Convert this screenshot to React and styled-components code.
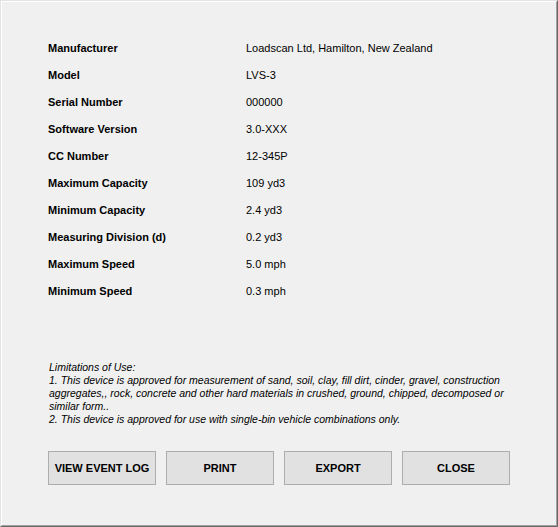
import React from 'react'
import styled, { createGlobalStyle } from 'styled-components'

const Global = createGlobalStyle`
  html, body { margin: 0; padding: 0; background: #f0f0f0; }
  body { font-family: "Liberation Sans", Arial, sans-serif; }
`

const Window = styled.div`
  box-sizing: border-box;
  width: 558px;
  height: 527px;
  background: #f0f0f0;
  border-top: 1px solid #e3e3e3;
  border-left: 1px solid #e3e3e3;
  border-right: 1px solid #696969;
  border-bottom: 1px solid #696969;
`

const Inner = styled.div`
  box-sizing: border-box;
  height: 100%;
  border-top: 1px solid #ffffff;
  border-left: 1px solid #ffffff;
  border-right: 1px solid #a0a0a0;
  border-bottom: 1px solid #a0a0a0;
  padding: 33px 0 0 46px;
  display: flex;
  flex-direction: column;
`

const Table = styled.div`
  display: grid;
  grid-template-columns: 198px 1fr;
  grid-auto-rows: 27px;
  font-size: 11px;
  color: #000;
`

const Label = styled.div`
  font-weight: bold;
  line-height: 27px;
`

const Value = styled.div`
  line-height: 27px;
`

const Notes = styled.div`
  margin-top: 56px;
  width: 462px;
  font-size: 10.5px;
  font-style: italic;
  line-height: 13px;
  color: #000;
  padding-left: 1px;
`

const Buttons = styled.div`
  display: flex;
  gap: 10px;
  margin-top: 25px;
`

const Button = styled.button`
  box-sizing: border-box;
  width: 108px;
  height: 34px;
  background: #e1e1e1;
  border: 1px solid #adadad;
  font-family: "Liberation Sans", Arial, sans-serif;
  font-size: 11px;
  font-weight: bold;
  color: #000;
  padding: 0;
  cursor: pointer;
`

const rows = [
  ['Manufacturer', 'Loadscan Ltd, Hamilton, New Zealand'],
  ['Model', 'LVS-3'],
  ['Serial Number', '000000'],
  ['Software Version', '3.0-XXX'],
  ['CC Number', '12-345P'],
  ['Maximum Capacity', '109 yd3'],
  ['Minimum Capacity', '2.4 yd3'],
  ['Measuring Division (d)', '0.2 yd3'],
  ['Maximum Speed', '5.0 mph'],
  ['Minimum Speed', '0.3 mph'],
]

export default function App() {
  return (
    <>
      <Global />
      <Window>
        <Inner>
          <Table>
            {rows.map(([k, v]) => (
              <React.Fragment key={k}>
                <Label>{k}</Label>
                <Value>{v}</Value>
              </React.Fragment>
            ))}
          </Table>
          <Notes>
            <div>Limitations of Use:</div>
            <div>
              1. This device is approved for measurement of sand, soil, clay, fill dirt, cinder, gravel, construction
              aggregates,, rock, concrete and other hard materials in crushed, ground, chipped, decomposed or
              similar form..
            </div>
            <div>2. This device is approved for use with single-bin vehicle combinations only.</div>
          </Notes>
          <Buttons>
            <Button>VIEW EVENT LOG</Button>
            <Button>PRINT</Button>
            <Button>EXPORT</Button>
            <Button>CLOSE</Button>
          </Buttons>
        </Inner>
      </Window>
    </>
  )
}
